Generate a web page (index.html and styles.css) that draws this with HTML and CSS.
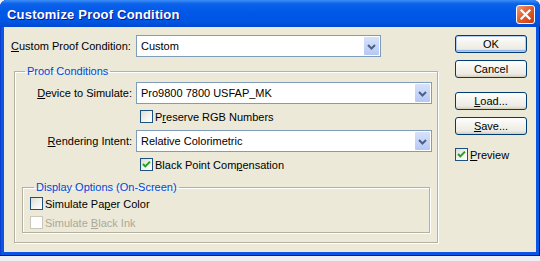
FILE: index.html
```html
<!DOCTYPE html>
<html lang="en">
<head>
    <meta charset="UTF-8">
    <meta name="viewport" content="width=device-width, initial-scale=1.0">
    <title>Customize Proof Condition</title>
    <link rel="stylesheet" href="styles.css">
</head>
<body>
    <div class="window">
        <div class="titlebar">
            <span class="title">Customize Proof Condition</span>
            <span class="close">
                <svg width="19" height="19" viewBox="0 0 19 19"><path d="M5.5 5.5 L13.5 13.5 M13.5 5.5 L5.5 13.5" stroke="#fff" stroke-width="2.2" stroke-linecap="square"/></svg>
            </span>
        </div>

        <div class="client">
            <div class="main">
                <div class="row">
                    <label class="top-label"><u>C</u>ustom Proof Condition:</label>
                    <div class="select select-short">
                        <span class="select-text">Custom</span>
                        <span class="dd"><svg width="15" height="20" viewBox="0 0 15 20"><path d="M4 8 L7.5 11.5 L11 8" fill="none" stroke="#4d6185" stroke-width="2"/></svg></span>
                    </div>
                </div>

                <fieldset class="group group-proof">
                    <legend>Proof Conditions</legend>

                    <div class="row">
                        <label class="row-label"><u>D</u>evice to Simulate:</label>
                        <div class="select select-wide">
                            <span class="select-text">Pro9800 7800 USFAP_MK</span>
                            <span class="dd"><svg width="15" height="20" viewBox="0 0 15 20"><path d="M4 8 L7.5 11.5 L11 8" fill="none" stroke="#4d6185" stroke-width="2"/></svg></span>
                        </div>
                    </div>

                    <div class="check-row in-proof gap-check">
                        <span class="check"></span>
                        <span>P<u>r</u>eserve RGB Numbers</span>
                    </div>

                    <div class="row gap-select">
                        <label class="row-label"><u>R</u>endering Intent:</label>
                        <div class="select select-wide">
                            <span class="select-text">Relative Colorimetric</span>
                            <span class="dd"><svg width="15" height="20" viewBox="0 0 15 20"><path d="M4 8 L7.5 11.5 L11 8" fill="none" stroke="#4d6185" stroke-width="2"/></svg></span>
                        </div>
                    </div>

                    <div class="check-row in-proof gap-check">
                        <span class="check checked">
                            <svg width="11" height="11" viewBox="0 0 11 11"><path d="M2 5 L4.3 7.4 L9 2.6" fill="none" stroke="#21a121" stroke-width="2"/></svg>
                        </span>
                        <span>Black Point Com<u>p</u>ensation</span>
                    </div>

                    <fieldset class="group group-display">
                        <legend>Display Options (On-Screen)</legend>
                        <div class="check-row">
                            <span class="check"></span>
                            <span>Simulate Pa<u>p</u>er Color</span>
                        </div>
                        <div class="check-row disabled gap-check">
                            <span class="check"></span>
                            <span>Simulate <u>B</u>lack Ink</span>
                        </div>
                    </fieldset>
                </fieldset>
            </div>

            <div class="side">
                <button class="btn btn-default">OK</button>
                <button class="btn gap-small">Cancel</button>
                <button class="btn gap-large"><u>L</u>oad...</button>
                <button class="btn gap-small"><u>S</u>ave...</button>
                <div class="check-row preview">
                    <span class="check checked">
                        <svg width="11" height="11" viewBox="0 0 11 11"><path d="M2 5 L4.3 7.4 L9 2.6" fill="none" stroke="#21a121" stroke-width="2"/></svg>
                    </span>
                    <span><u>P</u>review</span>
                </div>
            </div>
        </div>
    </div>
</body>
</html>
```

FILE: styles.css
```css
body {
    margin: 0;
    background: #eef0f8;
    font-family: "Liberation Sans", Arial, sans-serif;
    font-size: 11px;
    color: #000;
}

.window {
    width: 540px;
    height: 256px;
    box-sizing: border-box;
    padding-bottom: 4px;
    border-radius: 7px 7px 0 0;
    background: #0a55e3;
    box-shadow: inset -1px -1px 0 #001c94, inset 1px 0 0 #0b3fcf;
    display: flex;
    flex-direction: column;
}

.titlebar {
    height: 27px;
    display: flex;
    align-items: center;
    padding: 1px 5px 0 7px;
    box-sizing: border-box;
    border-radius: 7px 7px 0 0;
    background: linear-gradient(180deg, #3d8ef6 0%, #0c62ea 14%, #0058e8 45%, #0055e3 80%, #0049d0 100%);
}

.title {
    color: #fff;
    font-weight: bold;
    font-size: 13px;
    letter-spacing: 0.2px;
    text-shadow: 1px 1px 0 #0a1a8a;
}

.close {
    margin-left: auto;
    width: 19px;
    height: 19px;
    box-sizing: border-box;
    border: 1px solid #fff;
    border-radius: 3px;
    background: linear-gradient(135deg, #f09a7c 0%, #e2612f 45%, #c63b12 100%);
    display: flex;
}

.close svg {
    margin: -1px;
}

.client {
    flex: 1;
    margin: 0 4px;
    background: #ece9d8;
    display: flex;
    padding-top: 8px;
}

.main {
    width: 434px;
    box-sizing: border-box;
    padding-left: 7px;
}

.row {
    display: flex;
    align-items: center;
}

.top-label {
    width: 121px;
    margin-right: 4px;
}

.row-label {
    width: 117px;
    margin-right: 4px;
    text-align: right;
}

.select {
    height: 22px;
    box-sizing: border-box;
    border: 1px solid #7f9db9;
    background: #fff;
    display: flex;
    align-items: center;
}

.select-short {
    width: 245px;
}

.select-wide {
    width: 296px;
}

.select-text {
    flex: 1;
    padding-left: 4px;
}

.dd {
    width: 15px;
    align-self: stretch;
    margin: 1px;
    border-radius: 1px;
    background: linear-gradient(180deg, #d6e2fb 0%, #c3d4f8 60%, #b4c8f4 100%);
    display: flex;
}

.group {
    margin: 0;
    padding: 0;
    border: 1px solid #b4b1a2;
    box-shadow: inset 1px 1px 0 #fff, 1px 1px 0 #fff;
    box-sizing: border-box;
}

.group legend {
    padding: 0 2px;
    line-height: 14px;
    color: #0046d5;
}

.group-proof {
    width: 424px;
    margin: 7px 0 0 3px;
    padding-top: 4px;
}

.group-proof > legend {
    margin-left: 10px;
}

.group-display {
    width: 408px;
    margin: 9px 0 9px 7px;
    padding: 3px 0 3px 7px;
}

.group-display > legend {
    margin-left: 4px;
}

.check-row {
    display: flex;
    align-items: center;
    height: 13px;
    gap: 2px;
}

.in-proof {
    margin-left: 125px;
}

.gap-check {
    margin-top: 6px;
}

.gap-select {
    margin-top: 7px;
}

.check {
    width: 13px;
    height: 13px;
    box-sizing: border-box;
    border: 1px solid #1c5180;
    background: linear-gradient(135deg, #dcdcd7 0%, #f3f3ef 55%, #fff 100%);
    display: flex;
    align-items: center;
    justify-content: center;
}

.disabled {
    color: #aca899;
}

.disabled .check {
    border-color: #cac8bb;
    background: #fff;
}

.side {
    margin-left: 17px;
    width: 72px;
    display: flex;
    flex-direction: column;
}

.btn {
    height: 18px;
    padding: 0;
    font-family: inherit;
    font-size: 11px;
    color: #000;
    border: 1px solid #003c74;
    border-radius: 3px;
    background: linear-gradient(180deg, #fff 0%, #f5f4ee 40%, #ecebe4 80%, #d6d0c5 100%);
    box-shadow: inset 0 -1px 0 #d8d2bd;
}

.btn-default {
    box-shadow: inset 0 0 0 1px #b2ccf5, inset 0 -1px 0 1px #98b4e8;
}

.gap-small {
    margin-top: 7px;
}

.gap-large {
    margin-top: 14px;
}

.preview {
    margin-top: 13px;
}
```
